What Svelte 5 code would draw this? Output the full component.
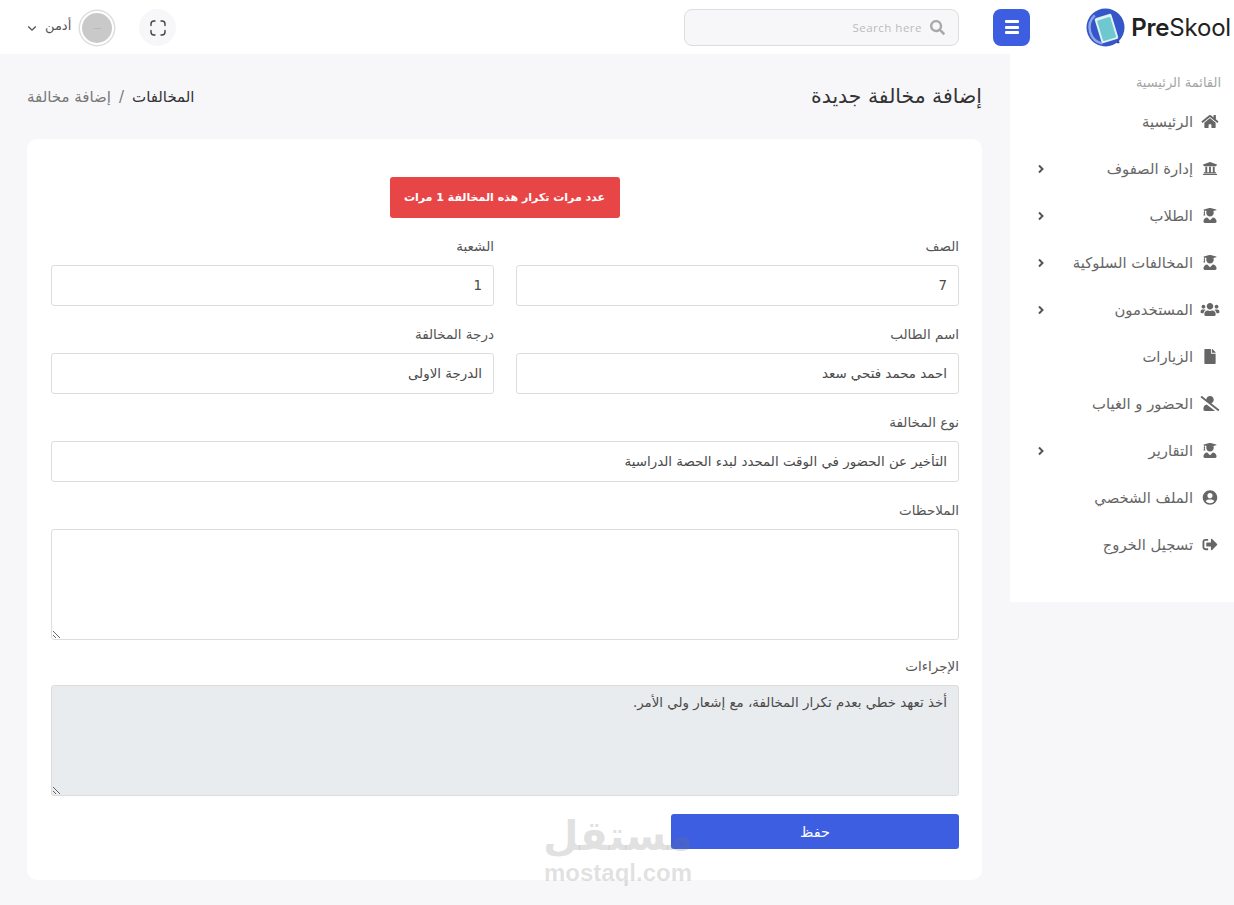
<script>
  const paths = {
    home: ['0 0 576 512', 'M280.37 148.26L96 300.11V464a16 16 0 0 0 16 16l112.06-.29a16 16 0 0 0 15.92-16V368a16 16 0 0 1 16-16h64a16 16 0 0 1 16 16v95.64a16 16 0 0 0 16 16.05L464 480a16 16 0 0 0 16-16V300L295.67 148.26a12.19 12.19 0 0 0-15.3 0zM571.6 251.47L488 182.56V44.05a12 12 0 0 0-12-12h-56a12 12 0 0 0-12 12v72.61L318.47 43a48 48 0 0 0-61 0L4.34 251.47a12 12 0 0 0-1.6 16.9l25.5 31A12 12 0 0 0 45.15 301l235.22-193.74a12.19 12.19 0 0 1 15.3 0L530.9 301a12 12 0 0 0 16.9-1.6l25.5-31a12 12 0 0 0-1.7-16.93z'],
    bank: ['0 0 512 512', 'M496 128v16a8 8 0 0 1-8 8h-24v12c0 6.627-5.373 12-12 12H60c-6.627 0-12-5.373-12-12v-12H24a8 8 0 0 1-8-8v-16a8 8 0 0 1 4.941-7.392l232-88a7.996 7.996 0 0 1 6.118 0l232 88A8 8 0 0 1 496 128zm-24 304H40c-13.255 0-24 10.745-24 24v16a8 8 0 0 0 8 8h464a8 8 0 0 0 8-8v-16c0-13.255-10.745-24-24-24zM96 192v192H60c-6.627 0-12 5.373-12 12v20h416v-20c0-6.627-5.373-12-12-12h-36V192h-64v192h-64V192h-64v192h-64V192H96z'],
    grad: ['0 0 448 512', 'M319.4 320.6L224 416l-95.4-95.4C57.1 323.7 0 382.2 0 454.4v9.6c0 26.5 21.5 48 48 48h352c26.5 0 48-21.5 48-48v-9.6c0-72.2-57.1-130.7-128.6-133.8zM13.6 79.8l6.4 1.5v58.4c-7 4.2-12 11.5-12 20.3 0 8.4 4.6 15.4 11.1 19.7L3.5 242c-1.7 6.9 2.1 14 7.6 14h41.8c5.5 0 9.3-7.1 7.6-14l-15.6-62.3C51.4 175.4 56 168.4 56 160c0-8.8-5-16.1-12-20.3V87.1l66 15.9c-8.6 17.2-14 36.4-14 57 0 70.7 57.3 128 128 128s128-57.3 128-128c0-20.6-5.3-39.8-14-57l96.3-23.2c18.2-4.4 18.2-27.1 0-31.5l-190.4-46c-13-3.1-26.7-3.1-39.7 0L13.6 48.2c-18.1 4.4-18.1 27.2 0 31.6z'],
    users: ['0 0 640 512', 'M96 224c35.3 0 64-28.7 64-64s-28.7-64-64-64-64 28.7-64 64 28.7 64 64 64zm448 0c35.3 0 64-28.7 64-64s-28.7-64-64-64-64 28.7-64 64 28.7 64 64 64zm32 32h-64c-17.6 0-33.5 7.1-45.1 18.6 40.3 22.1 68.9 62 75.1 109.4h66c17.7 0 32-14.3 32-32v-32c0-35.3-28.7-64-64-64zm-256 0c61.9 0 112-50.1 112-112S381.9 32 320 32 208 82.1 208 144s50.1 112 112 112zm76.8 32h-8.3c-20.8 10-43.9 16-68.5 16s-47.6-6-68.5-16h-8.3C179.6 288 128 339.6 128 403.2V432c0 26.5 21.5 48 48 48h288c26.5 0 48-21.5 48-48v-28.8c0-63.6-51.6-115.2-115.2-115.2zm-223.7-13.4C161.5 263.1 145.6 256 128 256H64c-35.3 0-64 28.7-64 64v32c0 17.7 14.3 32 32 32h65.9c6.3-47.4 34.9-87.3 75.2-109.4z'],
    file: ['0 0 384 512', 'M224 136V0H24C10.7 0 0 10.7 0 24v464c0 13.3 10.7 24 24 24h336c13.3 0 24-10.7 24-24V160H248c-13.2 0-24-10.8-24-24zm160-14.1v6.1H256V0h6.1c6.4 0 12.5 2.5 17 7l97.9 98c4.5 4.5 7 10.6 7 16.9z'],
    slash: ['0 0 640 512', 'M633.8 458.1L362.3 248.3C412.1 230.7 448 183.8 448 128 448 57.3 390.7 0 320 0c-67.1 0-121.5 51.8-126.9 117.4L45.5 3.4C38.5-2 28.5-.8 23 6.2L3.4 31.4c-5.4 7-4.2 17 2.8 22.4l588.4 454.7c7 5.4 17 4.2 22.5-2.8l19.6-25.3c5.5-6.9 4.2-17-2.9-22.3zM96 422.4V464c0 26.5 21.5 48 48 48h350.2L207.4 290.3C144.2 301.3 96 356 96 422.4z'],
    profile: ['0 0 496 512', 'M248 8C111 8 0 119 0 256s111 248 248 248 248-111 248-248S385 8 248 8zm0 96c48.6 0 88 39.4 88 88s-39.4 88-88 88-88-39.4-88-88 39.4-88 88-88zm0 344c-58.7 0-111.3-26.6-146.5-68.2 18.8-35.4 55.6-59.8 98.5-59.8 2.4 0 4.8.4 7.1 1.1 13 4.2 26.6 6.9 40.9 6.9 14.3 0 28-2.7 40.9-6.9 2.3-.7 4.7-1.1 7.1-1.1 42.9 0 79.7 24.4 98.5 59.8C359.3 421.4 306.7 448 248 448z'],
    out: ['0 0 512 512', 'M497 273L329 441c-15 15-41 4.5-41-17v-96H152c-13.3 0-24-10.7-24-24v-96c0-13.3 10.7-24 24-24h136V88c0-21.4 25.9-32 41-17l168 168c9.3 9.4 9.3 24.6 0 34zM192 436v-40c0-6.6-5.4-12-12-12H96c-17.7 0-32-14.3-32-32V160c0-17.7 14.3-32 32-32h84c6.6 0 12-5.4 12-12V76c0-6.6-5.4-12-12-12H96c-53 0-96 43-96 96v192c0 53 43 96 96 96h84c6.6 0 12-5.4 12-12z']
  };
  const search = 'M505 442.7L405.3 343c-4.5-4.5-10.6-7-17-7H372c27.6-35.3 44-79.7 44-128C416 93.1 322.9 0 208 0S0 93.1 0 208s93.1 208 208 208c48.3 0 92.7-16.4 128-44v16.3c0 6.4 2.5 12.5 7 17l99.7 99.7c9.4 9.4 24.6 9.4 33.9 0l28.3-28.3c9.4-9.4 9.4-24.6.1-34zM208 336c-70.7 0-128-57.2-128-128 0-70.7 57.2-128 128-128 70.7 0 128 57.2 128 128 0 70.7-57.2 128-128 128z';

  const menu = [
    { label: 'الرئيسية', icon: 'home' },
    { label: 'إدارة الصفوف', icon: 'bank', sub: true },
    { label: 'الطلاب', icon: 'grad', sub: true },
    { label: 'المخالفات السلوكية', icon: 'grad', sub: true },
    { label: 'المستخدمون', icon: 'users', sub: true },
    { label: 'الزيارات', icon: 'file' },
    { label: 'الحضور و الغياب', icon: 'slash' },
    { label: 'التقارير', icon: 'grad', sub: true },
    { label: 'الملف الشخصي', icon: 'profile' },
    { label: 'تسجيل الخروج', icon: 'out' }
  ];
</script>

<div class="page">
  <header class="top">
    <div class="user">
      <svg class="caret" viewBox="0 0 12 8"><path d="M1.5 1.5 6 6l4.5-4.5" fill="none" stroke="#4b5563" stroke-width="1.6" /></svg>
      <span class="uname">أدمن</span>
      <div class="avatar"><span>---</span></div>
      <div class="fs">
        <svg viewBox="0 0 18 18" width="18" height="18"><path d="M6 2H5A3 3 0 0 0 2 5v1.500M12 2h1a3 3 0 0 1 3 3v1.500M6 16H5a3 3 0 0 1-3-3v-1.500M12 16h1a3 3 0 0 0 3-3v-1.500" fill="none" stroke="#444" stroke-width="1.400" stroke-linecap="round" /></svg>
      </div>
    </div>
    <div class="right">
      <div class="search">
        <span>Search here</span>
        <svg viewBox="0 0 512 512" width="15" height="15"><path d={search} fill="#a9a9a9" /></svg>
      </div>
      <div class="burger"><i></i><i></i><i></i></div>
      <div class="logo">
        <svg viewBox="0 0 40 40" width="39" height="39">
          <circle cx="20" cy="20" r="19.500" fill="#3456c8" />
          <path d="M9 7.500A17 17 0 0 0 17 36.500" fill="none" stroke="#8ea6ee" stroke-width="2.500" />
          <g transform="rotate(-17 21 21)">
            <rect x="12" y="7.500" width="18" height="27" rx="2" fill="#dff1f3" />
            <rect x="14" y="10.500" width="14" height="22" rx="1" fill="#6fc8cf" />
          </g>
          <circle cx="33" cy="35" r="1.200" fill="#2b3f8f" />
        </svg>
        <span class="brand"><b>Pre</b>Skool</span>
      </div>
    </div>
  </header>

  <div class="body">
    <main class="content">
      <div class="head" dir="rtl">
        <h1>إضافة مخالفة جديدة</h1>
        <div class="crumbs"><span class="dark">المخالفات</span><span class="sep">/</span><span>إضافة مخالفة</span></div>
      </div>

      <section class="card" dir="rtl">
        <div class="alert"><span>عدد مرات تكرار هذه المخالفة 1 مرات</span></div>
        <div class="grid">
          <label class="f"><span>الصف</span><input value="7" readonly /></label>
          <label class="f"><span>الشعبة</span><input value="1" readonly /></label>
          <label class="f"><span>اسم الطالب</span><input value="احمد محمد فتحي سعد" readonly /></label>
          <label class="f"><span>درجة المخالفة</span><input value="الدرجة الاولى" readonly /></label>
          <label class="f wide"><span>نوع المخالفة</span><input value="التأخير عن الحضور في الوقت المحدد لبدء الحصة الدراسية" readonly /></label>
          <label class="f wide"><span>الملاحظات</span><textarea></textarea></label>
          <label class="f wide"><span>الإجراءات</span><textarea class="off" readonly>أخذ تعهد خطي بعدم تكرار المخالفة، مع إشعار ولي الأمر.</textarea></label>
        </div>
        <div class="actions"><button>حفظ</button></div>
      </section>
    </main>

    <aside class="side" dir="rtl">
      <div class="title">القائمة الرئيسية</div>
      {#each menu as m}
        <div class="item">
          <svg class="ic" viewBox={paths[m.icon][0]}><path d={paths[m.icon][1]} /></svg>
          <span class="txt">{m.label}</span>
          {#if m.sub}<svg class="chev" viewBox="0 0 8 10"><path d="M2 1.500 5.500 5 2 8.500" fill="none" stroke="#555" stroke-width="2" /></svg>{/if}
        </div>
      {/each}
    </aside>
  </div>

  <div class="mark" dir="ltr"><div class="ar">مستقل</div><div class="en">mostaql.com</div></div>
</div>

<style>
  :global(body) { margin: 0; background: #f7f7fa; }
  .page { position: relative; width: 1234px; height: 905px; overflow: hidden; background: #f7f7fa; font-family: "DejaVu Sans", "Noto Sans", sans-serif; color: #333; }

  .top { height: 54px; background: #fff; display: flex; justify-content: space-between; align-items: center; }
  .user { display: flex; align-items: center; padding-left: 27px; margin-top: 1px; }
  .caret { width: 10px; height: 7px; margin-top: 2px; }
  .uname { font-size: 13px; color: #555; margin-left: 8px; width: 27px; margin-top: -4px; white-space: nowrap; }
  .avatar { width: 30px; height: 30px; border-radius: 50%; background: #c9c9c9; border: 2px solid #fff; box-shadow: 0 0 0 1.500px #ddd; margin-left: 8px; display: flex; align-items: center; justify-content: center; font: 8px "Liberation Sans", sans-serif; color: #aaa; }
  .fs { width: 37px; height: 37px; border-radius: 50%; background: #f7f7fa; margin-left: 25px; display: flex; align-items: center; justify-content: center; }

  .right { display: flex; align-items: center; }
  .search { width: 260px; height: 35px; border: 1px solid #ddd; border-radius: 8px; background: #f7f7fa; display: flex; align-items: center; justify-content: flex-end; gap: 8px; padding-right: 13px; font: 11.500px "Open Sans", sans-serif; letter-spacing: .5px; color: #bbb; }
  .burger { width: 37px; height: 37px; margin-left: 34px; background: #3d5ee1; border-radius: 8px; display: flex; flex-direction: column; align-items: center; justify-content: center; gap: 2.500px; }
  .burger i { display: block; width: 14px; height: 3px; border-radius: 1px; background: #fff; }
  .logo { width: 204px; display: flex; align-items: center; justify-content: flex-end; gap: 6px; }
  .brand { font: 24px Inter, sans-serif; color: #222; letter-spacing: -.2px; padding-right: 3px; }
  .brand b { font-weight: 600; }

  .body { display: flex; align-items: flex-start; }
  .content { width: 955px; margin-left: 27px; }
  .head { height: 85px; display: flex; justify-content: space-between; align-items: center; padding-bottom: 2px; box-sizing: border-box; }
  h1 { margin: 0; font-size: 20.400px; font-weight: 400; color: #333; }
  .crumbs { display: flex; gap: 8px; font-size: 15px; color: #777; margin-top: 3px; }
  .crumbs .dark { color: #333; }

  .card { background: #fff; border-radius: 10px; height: 741px; box-sizing: border-box; padding: 38px 23px 0; }
  .alert { display: flex; justify-content: center; height: 41px; margin-bottom: 20px; }
  .alert span { background: #e84646; color: #fff; font-size: 11px; font-weight: 700; border-radius: 3px; width: 230px; display: flex; align-items: center; justify-content: center; white-space: nowrap; }
  .grid { display: grid; grid-template-columns: 443px 443px; column-gap: 22px; }
  .f { display: block; margin-bottom: 20px; }
  .f > span { display: block; font-size: 13.500px; color: #555; height: 16px; line-height: 16px; margin-bottom: 11px; }
  .wide { grid-column: 1 / 3; }
  .wide:has(textarea) { margin-bottom: 18px; }
  input, textarea { display: block; width: 100%; box-sizing: border-box; border: 1px solid #ddd; border-radius: 3px; background: #fff; font: 13.400px "DejaVu Sans", sans-serif; color: #4a4a4a; padding: 0 11px; outline: none; }
  input { height: 41px; }
  textarea { height: 111px; padding-top: 9px; }
  textarea.off { background: #e9ecef; }
  .actions { display: flex; }
  button { width: 288px; height: 35px; background: #3d5ee1; border: 0; border-radius: 3px; color: #fff; font: 14.400px "DejaVu Sans", sans-serif; }

  .side { width: 224px; height: 548px; margin-left: 28px; background: #fff; box-sizing: border-box; padding: 20px 14px 0 16px; }
  .title { font-size: 13px; color: #a5a5a5; height: 18px; line-height: 18px; margin: 0 -1px 6px 0; }
  .item { height: 47px; display: flex; align-items: center; font-size: 14.800px; color: #666; }
  .ic { width: 20px; height: 15px; fill: #666; margin-left: 7px; flex: none; }
  .txt { flex: 1; white-space: nowrap; }
  .chev { width: 8px; height: 10px; margin-left: 11px; }

  .mark { position: absolute; left: 543px; top: 812px; width: 150px; text-align: center; color: rgba(120, 120, 120, .22); pointer-events: none; }
  .ar { font-size: 41px; font-weight: 700; line-height: 48px; }
  .en { font: 700 24px "Liberation Sans", sans-serif; line-height: 26px; }
</style>
